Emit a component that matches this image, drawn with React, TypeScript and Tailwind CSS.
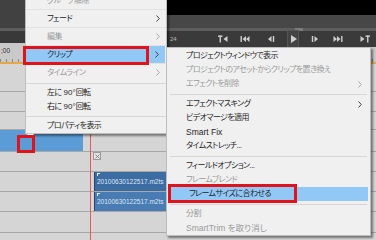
import React from "react";

// Premiere Elements style timeline with the clip context menu opened.

type MenuEntry =
  | { kind: "item"; label: string; disabled?: boolean; sub?: boolean; active?: boolean; latin?: boolean }
  | { kind: "sep" };

const CLIP_MENU: MenuEntry[] = [
  { kind: "item", label: "プロジェクトウィンドウで表示" },
  { kind: "item", label: "プロジェクトのアセットからクリップを置き換え", disabled: true },
  { kind: "item", label: "エフェクトを削除", disabled: true, sub: true },
  { kind: "sep" },
  { kind: "item", label: "エフェクトマスキング", sub: true },
  { kind: "item", label: "ビデオマージを適用" },
  { kind: "item", label: "Smart Fix", latin: true },
  { kind: "item", label: "タイムストレッチ..." },
  { kind: "sep" },
  { kind: "item", label: "フィールドオプション..." },
  { kind: "item", label: "フレームブレンド", disabled: true },
  { kind: "item", label: "フレームサイズに合わせる", active: true },
  { kind: "sep" },
  { kind: "item", label: "分割", disabled: true },
  { kind: "item", label: "SmartTrim を取り消し", disabled: true, latin: true },
];

function Chevron({ disabled }: { disabled?: boolean }) {
  return (
    <svg width="4" height="7" viewBox="0 0 4 7" className="shrink-0">
      <path d="M0.5 0.5 L3.3 3.5 L0.5 6.5" fill="none" stroke={disabled ? "#a8a8a8" : "#444"} strokeWidth="1" />
    </svg>
  );
}

function Ruler({ h }: { h: string }) {
  return (
    <div className={`${h} flex flex-col bg-[#c9c9c9]`}>
      <div className="flex-1" />
      <div className="h-[3px] bg-[repeating-linear-gradient(90deg,#8a8a8a_0_1px,transparent_1px_6px)]" />
      <div className="h-[2px] bg-[#e6a64a]" />
    </div>
  );
}

const ic = "#cfcfcf";
const TRANSPORT = [
  {
    ml: "ml-[48px]",
    svg: (
      <>
        <rect x="0" y="0.5" width="4.5" height="1.4" fill={ic} />
        <rect x="1.55" y="0.5" width="1.4" height="7" fill={ic} />
        <polygon points="9.5,1 5.5,4 9.5,7" fill={ic} />
      </>
    ),
  },
  {
    ml: "ml-[12px]",
    svg: (
      <>
        <rect x="0.5" y="1" width="1.4" height="6" fill={ic} />
        <polygon points="6,1 2.5,4 6,7" fill={ic} />
        <polygon points="9.5,1 6,4 9.5,7" fill={ic} />
      </>
    ),
  },
  {
    ml: "ml-[16px]",
    svg: (
      <>
        <polygon points="5.5,1 2,4 5.5,7" fill={ic} />
        <rect x="6.8" y="1" width="1.4" height="6" fill={ic} />
      </>
    ),
  },
  {
    ml: "ml-[12px]",
    svg: <polygon points="3,0 9,4 3,8" fill={ic} />,
  },
  {
    ml: "ml-[12px]",
    svg: (
      <>
        <rect x="1.8" y="1" width="1.4" height="6" fill={ic} />
        <polygon points="4.5,1 8,4 4.5,7" fill={ic} />
      </>
    ),
  },
  {
    ml: "ml-[13px]",
    svg: (
      <>
        <polygon points="0.5,1 4,4 0.5,7" fill={ic} />
        <polygon points="4,1 7.5,4 4,7" fill={ic} />
        <rect x="8.1" y="1" width="1.4" height="6" fill={ic} />
      </>
    ),
  },
  {
    ml: "ml-[17px]",
    svg: (
      <>
        <polygon points="0.5,1 4.5,4 0.5,7" fill={ic} />
        <rect x="5.5" y="0.5" width="4.5" height="1.4" fill={ic} />
        <rect x="7.05" y="0.5" width="1.4" height="7" fill={ic} />
      </>
    ),
  },
];

function Clip({ tone }: { tone: string }) {
  return (
    <div className={`ml-[94px] w-[80px] h-full ${tone} border-l border-[#23456e] flex flex-col pl-[2px]`}>
      <div className="mt-[1px] w-[3px] h-[3px] border-l border-t border-[#e8eef6]" />
      <div className="text-[6.5px] leading-[8px] text-[#dbe6f2] font-['Liberation_Sans',sans-serif] mt-[2px]">
        20100630122517.m2ts
      </div>
    </div>
  );
}

export default function App() {
  const row = "border-b border-[#a7a7a7] bg-[#d5d5d5]";
  const menuText =
    "text-[8px] tracking-[-0.6px] text-[#1e1e1e] font-['Liberation_Sans','Noto_Sans_CJK_JP',sans-serif] [font-feature-settings:'palt']";
  return (
    <div className="relative w-[376px] h-[240px] overflow-hidden bg-[#d5d5d5] font-['Liberation_Sans',sans-serif]">
      {/* panels above the timeline */}
      <div className="flex h-[64px]">
        <div className="w-[120px] flex flex-col">
          <div className="h-[28px] bg-[#414141]" />
          <div className="h-[3px] bg-[#5d5d5d]" />
          <div className="h-[12px] bg-[#393939]" />
          <div className="relative">
            <div className="absolute left-[1px] top-[4px] text-[6.5px] leading-[8px] text-[#333]">;00</div>
          </div>
          <Ruler h="flex-1" />
        </div>
        <div className="flex-1 flex flex-col">
          <div className="h-[15px] bg-black" />
          <div className="h-[13px] bg-[#474747]" />
          <div className="h-[3px] bg-[#5d5d5d] flex">
            <div className="ml-[175px] w-[8px] bg-[#7c7c7c]" />
          </div>
          <div className="h-[16px] bg-[#3a3a3a] flex items-center">
            <span className="ml-[50px] w-0 text-[6px] leading-none text-[#b9b9b9]">24</span>
            {TRANSPORT.map((t, i) => (
              <div
                key={i}
                className={`${t.ml} w-[10px] h-[16px] flex items-center justify-center ${i === 3 ? "bg-[#444] outline outline-1 outline-[#555]" : ""}`}
              >
                <svg width="10" height="8" viewBox="0 0 10 8">
                  {t.svg}
                </svg>
              </div>
            ))}
          </div>
          <Ruler h="flex-1" />
        </div>
      </div>

      {/* tracks */}
      <div className={`h-[28px] ${row}`} />
      <div className={`h-[20px] ${row}`} />
      <div className={`h-[18px] ${row}`} />
      <div className={`h-[22px] ${row} flex`}>
        <div className="w-[83px] h-full bg-[#5b9bd6]" />
      </div>
      <div className={`h-[20px] ${row} flex`}>
        <div className="ml-[93px] w-[8px] h-[8px] bg-[#e4e4e4] border border-[#9a9a9a] flex items-center justify-center">
          <svg width="5" height="5" viewBox="0 0 5 5">
            <path d="M0.5 0.5 L4.5 4.5 M4.5 0.5 L0.5 4.5" stroke="#777" strokeWidth="0.8" />
          </svg>
        </div>
      </div>
      <div className={`h-[20px] ${row}`}>
        <Clip tone="bg-[#3d6ca3]" />
      </div>
      <div className={`h-[20px] ${row}`}>
        <Clip tone="bg-[#4a7cb4]" />
      </div>
      <div className={`h-[21px] ${row}`} />
      <div className="h-[7px]" />

      {/* playhead */}
      <div className="absolute left-[90px] top-[62px] bottom-0 w-px bg-[#e25a5a]" />

      {/* main context menu */}
      <div className={`absolute left-[25px] top-[-9px] w-[142px] bg-[#f0f0f0] border border-[#bdbdbd] shadow-[2px_2px_2px_rgba(0,0,0,0.45)] ${menuText}`}>
        <div className="h-[17px] flex items-center pl-[21px] text-[#9b9b9b]">グループ解除</div>
        <div className="h-px bg-[#e2e2e2]" />
        <div className="h-[17px] flex items-center pl-[21px] pr-[6px]">
          <span className="flex-1">フェード</span>
          <Chevron />
        </div>
        <div className="h-px bg-[#e2e2e2]" />
        <div className="h-[17px] flex items-center pl-[21px] pr-[6px] text-[#9b9b9b]">
          <span className="flex-1">編集</span>
          <Chevron disabled />
        </div>
        <div className="h-px bg-[#e2e2e2]" />
        <div className="h-[17px] flex items-center pl-[21px] pr-[6px] mr-px bg-[#92c8f6]">
          <span className="flex-1">クリップ</span>
          <Chevron />
        </div>
        <div className="h-px bg-[#e2e2e2]" />
        <div className="h-[17px] flex items-center pl-[21px] pr-[6px] text-[#9b9b9b]">
          <span className="flex-1">タイムライン</span>
          <Chevron disabled />
        </div>
        <div className="h-[5px] flex flex-col justify-center">
          <div className="h-px bg-[#d6d6d6]" />
        </div>
        <div className="h-[14px] flex items-center pl-[21px]">
          左に <span className="tracking-normal ml-[2px]">90°</span>回転
        </div>
        <div className="h-[14px] flex items-center pl-[21px]">
          右に <span className="tracking-normal ml-[2px]">90°</span>回転
        </div>
        <div className="h-[5px] flex flex-col justify-center">
          <div className="h-px bg-[#d6d6d6]" />
        </div>
        <div className="h-[13px] flex items-center pl-[21px]">プロパティを表示</div>
        <div className="h-px" />
      </div>

      {/* clip submenu */}
      <div className={`absolute left-[166px] top-[47px] w-[205px] bg-[#f0f0f0] border border-[#bdbdbd] shadow-[2px_2px_2px_rgba(0,0,0,0.45)] pt-px ${menuText}`}>
        {CLIP_MENU.map((m, i) =>
          m.kind === "sep" ? (
            <div key={i} className="h-[6px] flex flex-col justify-center px-[3px]">
              <div className="h-px bg-[#d6d6d6]" />
            </div>
          ) : (
            <div
              key={i}
              className={`h-[14px] flex items-center pl-[19px] pr-[8px] ${m.active ? "bg-[#92c8f6] ml-[3px] mr-[2px] pl-[16px]" : ""} ${m.disabled ? "text-[#9b9b9b]" : ""} ${m.latin ? "text-[8.5px] tracking-normal" : ""}`}
            >
              <span className="flex-1 whitespace-nowrap">{m.label}</span>
              {m.sub && <Chevron disabled={m.disabled} />}
            </div>
          )
        )}
      </div>

      {/* annotation boxes */}
      <div className="absolute left-[23px] top-[46px] w-[126px] h-[19px] border-[3px] border-[#e0121c]" />
      <div className="absolute left-[168px] top-[184px] w-[129px] h-[19px] border-[3px] border-[#e0121c]" />
      <svg className="absolute left-[25px] top-[133px]" width="9" height="9" viewBox="0 0 9 9">
        <polygon points="0.5,0.5 8.5,0.5 8.5,6" fill="#fff" stroke="#bbb" strokeWidth="0.6" />
      </svg>
      <div className="absolute left-[17px] top-[135px] w-[18px] h-[18px] border-[3px] border-[#e0121c]" />
    </div>
  );
}
